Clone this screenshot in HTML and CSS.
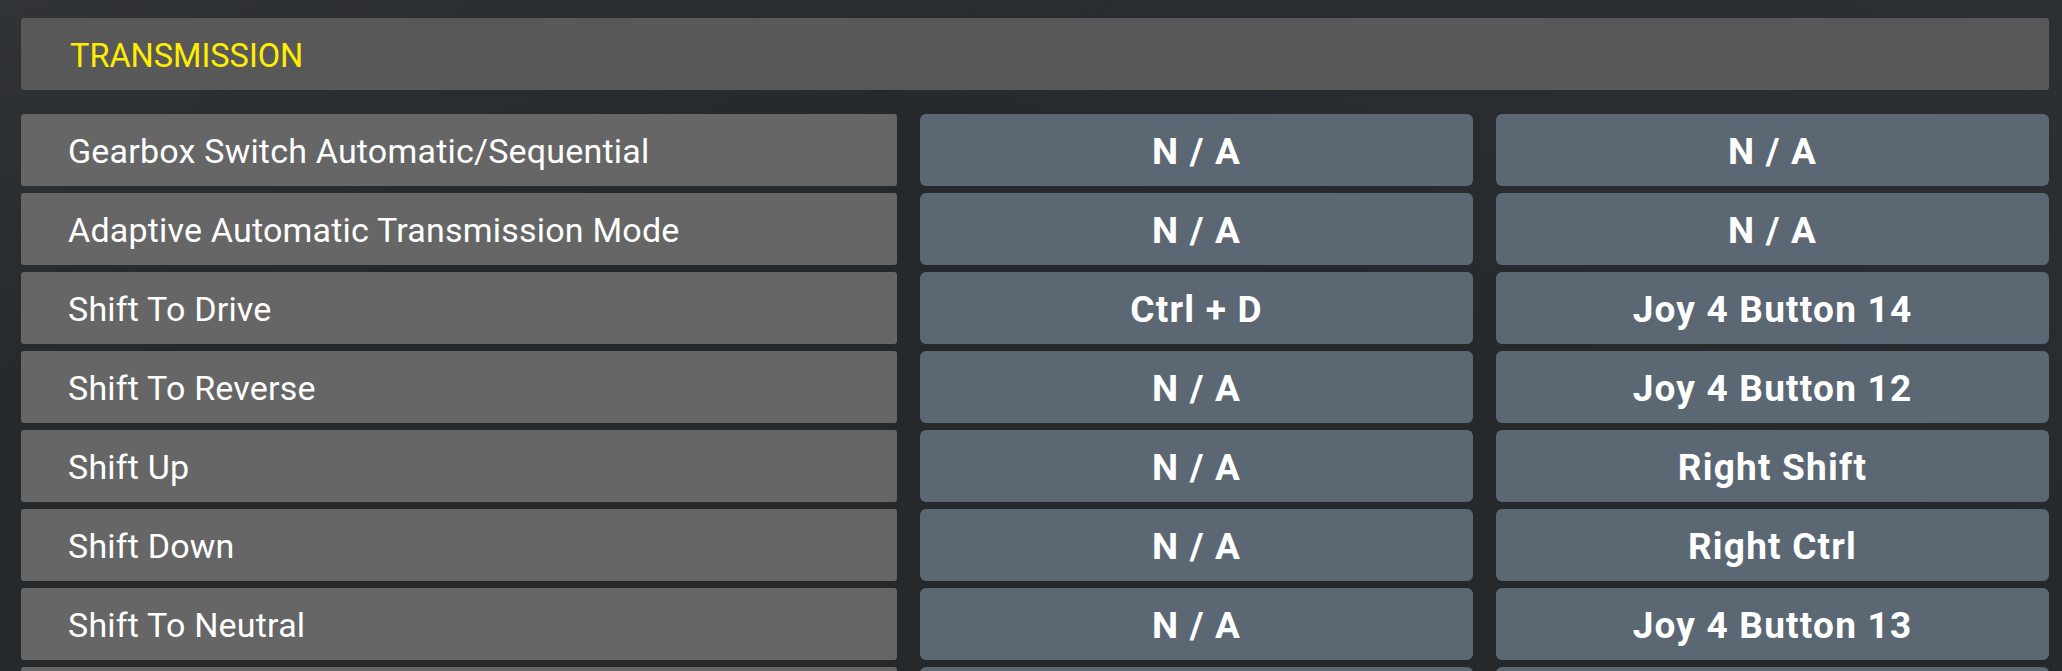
FILE: index.html
```html
<!DOCTYPE html>
<html lang="en">
<head>
  <meta charset="UTF-8">
  <meta name="viewport" content="width=device-width, initial-scale=1.0">
  <title>Controls - Transmission</title>
  <link rel="stylesheet" href="styles.css">
</head>
<body>
  <div class="controls-page">
    <!-- Category header -->
    <div class="category-header">TRANSMISSION</div>

    <!-- Bindings: action, primary key, secondary key -->
    <div class="binding-list">
      <div class="binding-row">
        <div class="action-name">Gearbox Switch Automatic/Sequential</div>
        <div class="binding-key">N / A</div>
        <div class="binding-key">N / A</div>
      </div>
      <div class="binding-row">
        <div class="action-name">Adaptive Automatic Transmission Mode</div>
        <div class="binding-key">N / A</div>
        <div class="binding-key">N / A</div>
      </div>
      <div class="binding-row">
        <div class="action-name">Shift To Drive</div>
        <div class="binding-key">Ctrl + D</div>
        <div class="binding-key">Joy 4 Button 14</div>
      </div>
      <div class="binding-row">
        <div class="action-name">Shift To Reverse</div>
        <div class="binding-key">N / A</div>
        <div class="binding-key">Joy 4 Button 12</div>
      </div>
      <div class="binding-row">
        <div class="action-name">Shift Up</div>
        <div class="binding-key">N / A</div>
        <div class="binding-key">Right Shift</div>
      </div>
      <div class="binding-row">
        <div class="action-name">Shift Down</div>
        <div class="binding-key">N / A</div>
        <div class="binding-key">Right Ctrl</div>
      </div>
      <div class="binding-row">
        <div class="action-name">Shift To Neutral</div>
        <div class="binding-key">N / A</div>
        <div class="binding-key">Joy 4 Button 13</div>
      </div>
      <!-- next row only peeks in at the bottom edge -->
      <div class="binding-row binding-row-partial">
        <div class="action-name"></div>
        <div class="binding-key"></div>
        <div class="binding-key"></div>
      </div>
    </div>
  </div>
</body>
</html>
```

FILE: styles.css
```css
* {
  box-sizing: border-box;
  margin: 0;
  padding: 0;
}

html, body {
  height: 100%;
  overflow: hidden;
}

body {
  font-family: Roboto, 'Liberation Sans', Arial, sans-serif;
  color: #fff;
  background-color: #26292c;
  background-image:
    linear-gradient(160deg, rgba(255, 255, 255, 0.05) 0%, rgba(255, 255, 255, 0) 30%),
    linear-gradient(20deg, rgba(0, 0, 0, 0) 60%, rgba(90, 100, 120, 0.12) 100%);
}

.controls-page {
  padding: 18px 13px 0 21px;
}

.category-header {
  height: 72px;
  display: flex;
  align-items: center;
  padding: 3px 0 0 49px;
  margin-bottom: 24px;
  background-color: #585858;
  border-radius: 3px;
  color: #ffee00;
  font-size: 32.5px;
}

.binding-list {
  display: flex;
  flex-direction: column;
  gap: 7px;
}

.binding-row {
  display: grid;
  grid-template-columns: 876px 553px 553px;
  column-gap: 23px;
  height: 72px;
  flex-shrink: 0;
}

.action-name {
  display: flex;
  align-items: center;
  padding: 2px 0 0 47px;
  background-color: #666;
  border-radius: 3px;
  font-size: 34px;
  letter-spacing: 0.2px;
}

.binding-key {
  display: flex;
  align-items: center;
  justify-content: center;
  padding-top: 3px;
  background-color: #5b6873;
  border-radius: 6px;
  font-size: 37px;
  font-weight: 700;
  letter-spacing: 1.2px;
}
```
